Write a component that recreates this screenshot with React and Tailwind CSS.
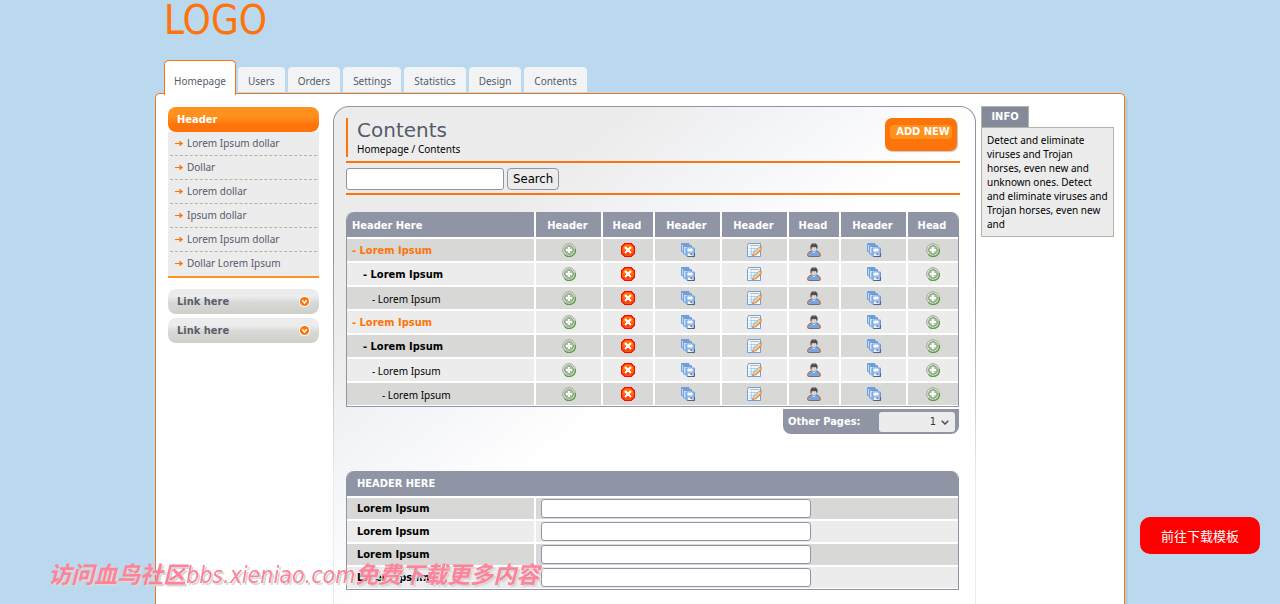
import React, { useState } from 'react'

const tabs = ['Users', 'Orders', 'Settings', 'Statistics', 'Design', 'Contents'];

const menu = ['Lorem Ipsum dollar', 'Dollar', 'Lorem dollar', 'Ipsum dollar', 'Lorem Ipsum dollar', 'Dollar Lorem Ipsum'];

const columns = [
  { label: 'Header', icon: 'add', width: 'w-[67px]' },
  { label: 'Head', icon: 'remove', width: 'w-[52px]' },
  { label: 'Header', icon: 'save', width: 'w-[67px]' },
  { label: 'Header', icon: 'edit', width: 'w-[67px]' },
  { label: 'Head', icon: 'user', width: 'w-[52px]' },
  { label: 'Header', icon: 'save', width: 'w-[67px]' },
  { label: 'Head', icon: 'add', width: 'w-[52px]' },
];

// level 0 = root, 3 = deepest
const rows = [0, 1, 2, 0, 1, 2, 3];

const levelStyles = [
  "pl-[5px] font-bold text-[#ff740a] font-['DejaVu_Sans_Condensed',sans-serif] text-[11px]",
  "pl-4 font-bold text-black font-['DejaVu_Sans_Condensed',sans-serif] text-[11px]",
  "pl-[25px] text-black",
  "pl-[35px] text-black",
];

const fields = ['field-1', 'field-2', 'field-3', 'field-4'];

function AddIcon() {
  return (
    <svg viewBox="0 0 14 14" className="w-3.5 h-3.5">
      <circle cx="7" cy="7" r="6.3" fill="#dfe8d8" stroke="#9aa592" strokeWidth="1" />
      <path d="M2.4 11.4A6.3 6.3 0 0 0 13.3 6" fill="none" stroke="#5c9f48" strokeWidth="1.3" />
      <circle cx="7" cy="7" r="4.4" fill="#b0c0a6" stroke="#7fa570" strokeWidth="1" />
      <path d="M7 4v6M4 7h6" stroke="#fff" strokeWidth="2" />
    </svg>
  )
}

function RemoveIcon() {
  return (
    <svg viewBox="0 0 14 14" className="w-3.5 h-3.5">
      <path d="M4 .5h6L13.500 4v6L10 13.500H4L.5 10V4z" fill="#ff740a" stroke="#f00" strokeWidth="1.400" />
      <path d="M2.500 7.500h9v2.500l-2 1.800H4.500l-2-1.800z" fill="#f83808" />
      <path d="M4 4l6 6M10 4L4 10" stroke="#fff" strokeWidth="2.300" />
    </svg>
  )
}

function SaveIcon() {
  return (
    <svg viewBox="0 0 14 14" className="w-3.5 h-3.5">
      <path d="M.5.500h7.500v8h-7.500z" fill="#c4dcf4" stroke="#6f9fdf" />
      <path d="M1 1.500h7" stroke="#6c9ede" />
      <path d="M2.500 2.500h8v8.500h-8z" fill="#d4e6f6" stroke="#6f9fdf" />
      <path d="M3 3.500h7" stroke="#6c9ede" />
      <path d="M5 5h8.500v8.500H6L5 12.500z" fill="#8fb8ea" stroke="#6f9fdf" />
      <path d="M6.500 13.500h7V10" fill="none" stroke="#56627c" />
      <path d="M6.500 5.500h5v3h-5z" fill="#fff" />
      <path d="M7 10.500h4.500V13H7z" fill="#eef4fa" />
      <path d="M9.500 10.500h1.500V12H9.500z" fill="#56627c" />
    </svg>
  )
}

function EditIcon() {
  return (
    <svg viewBox="0 0 15 14" className="w-[15px] h-3.5">
      <path d="M1.500.500h12v13h-13v-11z" fill="#f3f8fc" stroke="#6f9fdf" />
      <path d="M3 2.500h9" stroke="#b8b8a8" />
      <path d="M2.500 5.500h8M2.500 8.500h6M2.500 11h4M4.500 4.500v8M7.500 4.500v6" stroke="#a5cdeb" strokeWidth=".9" />
      <path d="M5.500 12.800l1-3 6-6 2 2-6 6z" fill="#dcd5c4" stroke="#a39f91" strokeWidth=".9" />
      <path d="M8.500 12l6-6" stroke="#ff8a1e" strokeWidth="1.200" />
      <path d="M12.400 3.400l1.800-.4.600 2z" fill="#ff740a" />
      <path d="M5.200 13.200l.8-2 1.400 1.200z" fill="#ff740a" />
    </svg>
  )
}

function UserIcon() {
  return (
    <svg viewBox="0 0 14 14" className="w-3.5 h-3.5">
      <path d="M.5 12.500c0-2.500 1.800-4 4-4.500h5c2.200.500 4 2 4 4.500l-1.500 1H2z" fill="#79a5e6" stroke="#6b7080" />
      <path d="M5 8l2 2.300L9 8z" fill="#e4edf7" />
      <path d="M0 11h1.500v2.200H0zM12.500 11H14v2.200h-1.500z" fill="#ff740a" />
      <path d="M4.200 4h5.600v2.500L8.300 8.500H5.700L4.200 6.500z" fill="#ddd8cd" stroke="#8b8d93" strokeWidth=".6" />
      <path d="M3.500 5.500V2.500L5 .5h4l1.500 2v3h-1L9 4H5l-.5 1.500z" fill="#484d5c" />
      <path d="M6 1h1.500v1.200H6zM3.500 5.200h1v1.300h-1z" fill="#e8400a" />
    </svg>
  )
}

const icons = { add: AddIcon, remove: RemoveIcon, save: SaveIcon, edit: EditIcon, user: UserIcon };
const iconLabels = { add: 'Add', remove: 'Remove', save: 'Save', edit: 'Edit', user: 'User' };

function ArrowIcon() {
  return (
    <svg viewBox="0 0 8 7" className="w-2 h-[7px] shrink-0">
      <path d="M0 3h6v1H0z" fill="#ff740a" />
      <path d="M4.500.500l3.500 3-3.500 3z" fill="#ff740a" />
    </svg>
  )
}

function LinkButton() {
  return (
    <a href="#" className="flex items-center justify-between h-[25px] pl-[9px] pr-[9px] rounded-lg bg-linear-to-b from-[#ececec] from-30% via-[#d8d8d6] via-55% to-[#cfcfc9] font-['DejaVu_Sans_Condensed',sans-serif] text-[11px] font-bold text-[#5b5e6c]">
      Link here
      <svg viewBox="0 0 11 11" className="w-[11px] h-[11px]">
        <circle cx="5.500" cy="5.500" r="5.500" fill="#fff" />
        <circle cx="5.500" cy="5.500" r="4.600" fill="#ff740a" />
        <path d="M3.300 4.200l2.200 2.800 2.200-2.800" fill="none" stroke="#fff" strokeWidth="1.400" />
      </svg>
    </a>
  )
}

export default function App() {

  const [search, setSearch] = useState('');

  return (
    <div className="min-h-screen flex flex-col bg-[#bad8ee] font-['Noto_Sans',sans-serif] text-[10px] leading-[14px] text-black">
      <div className="w-full max-w-[970px] mx-auto flex-1 flex flex-col">

        {/* Logo + tabs */}
        <header className="pl-[9px]">
          <h1 className="h-[60px] text-[40px] leading-10 text-[#ff740a] font-['DejaVu_Sans_Condensed',sans-serif]">LOGO</h1>
          <nav className="flex items-end gap-[3px] text-[#565b6b]">
            <a href="#" className="relative -mb-px h-[35px] flex items-center pt-1.5 px-[9px] mr-[-1px] bg-white border border-b-0 border-[#ff740a] rounded-t-[5px]">Homepage</a>
            {tabs.map((tab) => (
              <a key={tab} href="#" className="h-[25px] mb-0.5 px-2.5 flex items-center pt-0.5 rounded-t bg-[#f2f3f4]">{tab}</a>
            ))}
          </nav>
        </header>

        {/* Page */}
        <div className="flex-1 flex -mt-px bg-white border border-b-0 border-[#e8781e] rounded-t-[5px] shadow-[3px_3px_0_#b5cbd7] pt-3 pl-3 pr-2.5">

          <aside className="w-[151px] shrink-0 mr-3.5 pt-px">
            <h2 className="h-[25px] pl-[9px] flex items-center rounded-lg bg-linear-to-b from-[#ff921e] from-35% to-[#ff740a] to-70% text-white font-bold font-['DejaVu_Sans_Condensed',sans-serif] text-[11px]">Header</h2>
            <ul className="px-0.5 bg-[#ececec] border-b-2 border-[#ff921e] text-[#565b6b]">
              {menu.map((item, i) => (
                <li key={i} className="h-6 border-b border-dashed border-[#b5b5a6] last:border-b-0">
                  <a href="#" className="h-[22px] pl-[5px] flex items-center gap-1">
                    <ArrowIcon />
                    {item}
                  </a>
                </li>
              ))}
            </ul>
            <div className="mt-[11px] flex flex-col gap-1">
              <LinkButton />
              <LinkButton />
            </div>
          </aside>

          {/* Contents */}
          <div className="flex-1 min-w-0 flex flex-col rounded-t-[16px] p-px pb-0 bg-linear-to-b from-[#9095a5] from-30% to-[#ececec] to-75%">
            <main className="flex-1 rounded-t-[15px] pt-[11px] pl-3 pr-[15px] bg-linear-to-br from-[#ececec] from-24% via-[#f4f5f8] via-37% to-white to-52%">
              <div className="flex justify-between pb-1 border-b-2 border-[#ff740a]">
                <div className="h-[39px] pl-[9px] border-l-2 border-[#ff740a]">
                  <h2 className="text-xl leading-6 text-[#565b6b] font-['DejaVu_Sans',sans-serif]">Contents</h2>
                  <p><a href="#">Homepage</a> / <a href="#">Contents</a></p>
                </div>
                <button className="w-[72px] h-[33px] mr-[3px] px-[5px] pb-[5px] rounded-[7px] bg-[#ff740a] shadow-[1px_1px_1px_#c8c8c8] font-['DejaVu_Sans_Condensed',sans-serif] text-[11px] font-bold text-white cursor-pointer">
                  <span className="block rounded-sm bg-[#ff921e] pl-1 whitespace-nowrap">ADD NEW</span>
                </button>
              </div>

              <form className="flex gap-[3px] pt-[5px] pb-[3px] border-b-2 border-[#ff740a]" onSubmit={(e) => e.preventDefault()}>
                <input
                  type="text"
                  aria-label="Search"
                  value={search}
                  onChange={(e) => setSearch(e.target.value)}
                  className="w-[158px] h-[22px] px-1 bg-white border border-[#9095a5] rounded-[3px]"
                />
                <button className="h-[22px] px-[5px] border border-[#9095a5] rounded-[4px] bg-[#ececec] font-['DejaVu_Sans_Condensed',sans-serif] text-[13px] cursor-pointer">Search</button>
              </form>

              <div className="mt-[17px] mr-px pb-px bg-white border border-t-0 border-[#9095a5] rounded-t-lg overflow-hidden">
                <table className="w-full table-fixed border-collapse">
                  <thead>
                    <tr className="h-[25px] bg-[#9095a5] text-white font-['DejaVu_Sans_Condensed',sans-serif] text-[11px]">
                      <th className="p-0 pt-0.5 pl-[5px] text-left">Header Here</th>
                      {columns.map((col, i) => (
                        <th key={i} className={`${col.width} p-0 pt-0.5 shadow-[inset_2px_0_0_#fff]`}>{col.label}</th>
                      ))}
                    </tr>
                  </thead>
                  <tbody>
                    {rows.map((level, i) => (
                      <tr key={i} className="h-6 odd:bg-[#d8d8d6] even:bg-[#ececec]">
                        <td className={`p-0 pt-[3px] shadow-[inset_0_2px_0_#fff] ${levelStyles[level]}`}>- Lorem Ipsum</td>
                        {columns.map((col, j) => {
                          const Icon = icons[col.icon];
                          return (
                            <td key={j} className="p-0 pt-0.5 pl-0.5 shadow-[inset_2px_2px_0_#fff]">
                              <a href="#" aria-label={iconLabels[col.icon]} className="flex justify-center">
                                <Icon />
                              </a>
                            </td>
                          )
                        })}
                      </tr>
                    ))}
                  </tbody>
                </table>
              </div>

              <div className="mt-0.5 mr-px ml-auto w-[176px] h-[25px] pl-[5px] pr-1 flex items-center justify-between rounded-b-lg bg-[#9095a5]">
                <label htmlFor="pages" className="text-white font-bold font-['DejaVu_Sans_Condensed',sans-serif] text-[11px]">Other Pages:</label>
                <div className="relative">
                  <select id="pages" className="appearance-none w-[76px] h-5 pr-[19px] rounded-[3px] bg-[#ececec] text-right text-[#33363f] font-['DejaVu_Sans_Condensed',sans-serif] text-[11px] [text-align-last:right]">
                    <option>1</option>
                    <option>2</option>
                    <option>3</option>
                  </select>
                  <svg viewBox="0 0 8 5" className="absolute right-1.5 top-2 w-2 h-[5px] pointer-events-none">
                    <path d="M.700.700L4 4 7.300.700" fill="none" stroke="#484d5c" strokeWidth="1.500" />
                  </svg>
                </div>
              </div>

              <div className="mt-[37px] mb-3.5 mr-px bg-white border border-t-0 border-[#9095a5] rounded-t-lg overflow-hidden font-['DejaVu_Sans_Condensed',sans-serif] text-[11px] font-bold">
                <h3 className="h-[25px] pl-2.5 pt-px flex items-center bg-[#9095a5] text-white">HEADER HERE</h3>
                <form className="pt-0.5 pb-px flex flex-col gap-0.5">
                  {fields.map((id) => (
                    <div key={id} className="group flex gap-0.5 h-[21px]">
                      <label htmlFor={id} className="w-[187px] pl-2.5 pt-px flex items-center group-odd:bg-[#d8d8d6] group-even:bg-[#ececec]">Lorem Ipsum</label>
                      <div className="flex-1 pl-[5px] flex items-center group-odd:bg-[#d8d8d6] group-even:bg-[#ececec]">
                        <input id={id} type="text" className="w-[270px] h-[19px] px-1 bg-white border border-[#9095a5] rounded-[3px] font-normal" />
                      </div>
                    </div>
                  ))}
                </form>
              </div>
            </main>
          </div>

          {/* Info */}
          <aside className="w-[133px] shrink-0 ml-[5px]">
            <h2 className="w-12 h-[21px] flex items-center justify-center bg-[#858a9b] border border-b-0 border-[#b5b5a6] text-white font-bold font-['DejaVu_Sans_Condensed',sans-serif] text-[11px]">INFO</h2>
            <p className="py-[5px] pl-[5px] bg-[#ececec] border border-[#b5b5a6]">
              Detect and eliminate<br />
              viruses and Trojan<br />
              horses, even new and<br />
              unknown ones. Detect<br />
              and eliminate viruses and<br />
              Trojan horses, even new<br />
              and
            </p>
          </aside>
        </div>
      </div>

      {/* Watermark */}
      <p className="fixed left-12 bottom-[15px] leading-7 text-[23px] italic whitespace-nowrap pointer-events-none text-[#ff829b] [text-shadow:2px_2px_0_#d8d8d6] font-['DejaVu_Sans_Condensed','Noto_Sans_CJK_SC',sans-serif]">
        <span className="font-bold">访问血鸟社区</span>bbs.xieniao.com<span className="font-bold">免费下载更多内容</span>
      </p>

      <a href="#" className="fixed right-5 bottom-[50px] w-[120px] h-[37px] flex items-center justify-center rounded-[10px] bg-[#f00] text-white text-[13px] font-['Noto_Sans_CJK_SC',sans-serif]">前往下载模板</a>
    </div>
  )
}
